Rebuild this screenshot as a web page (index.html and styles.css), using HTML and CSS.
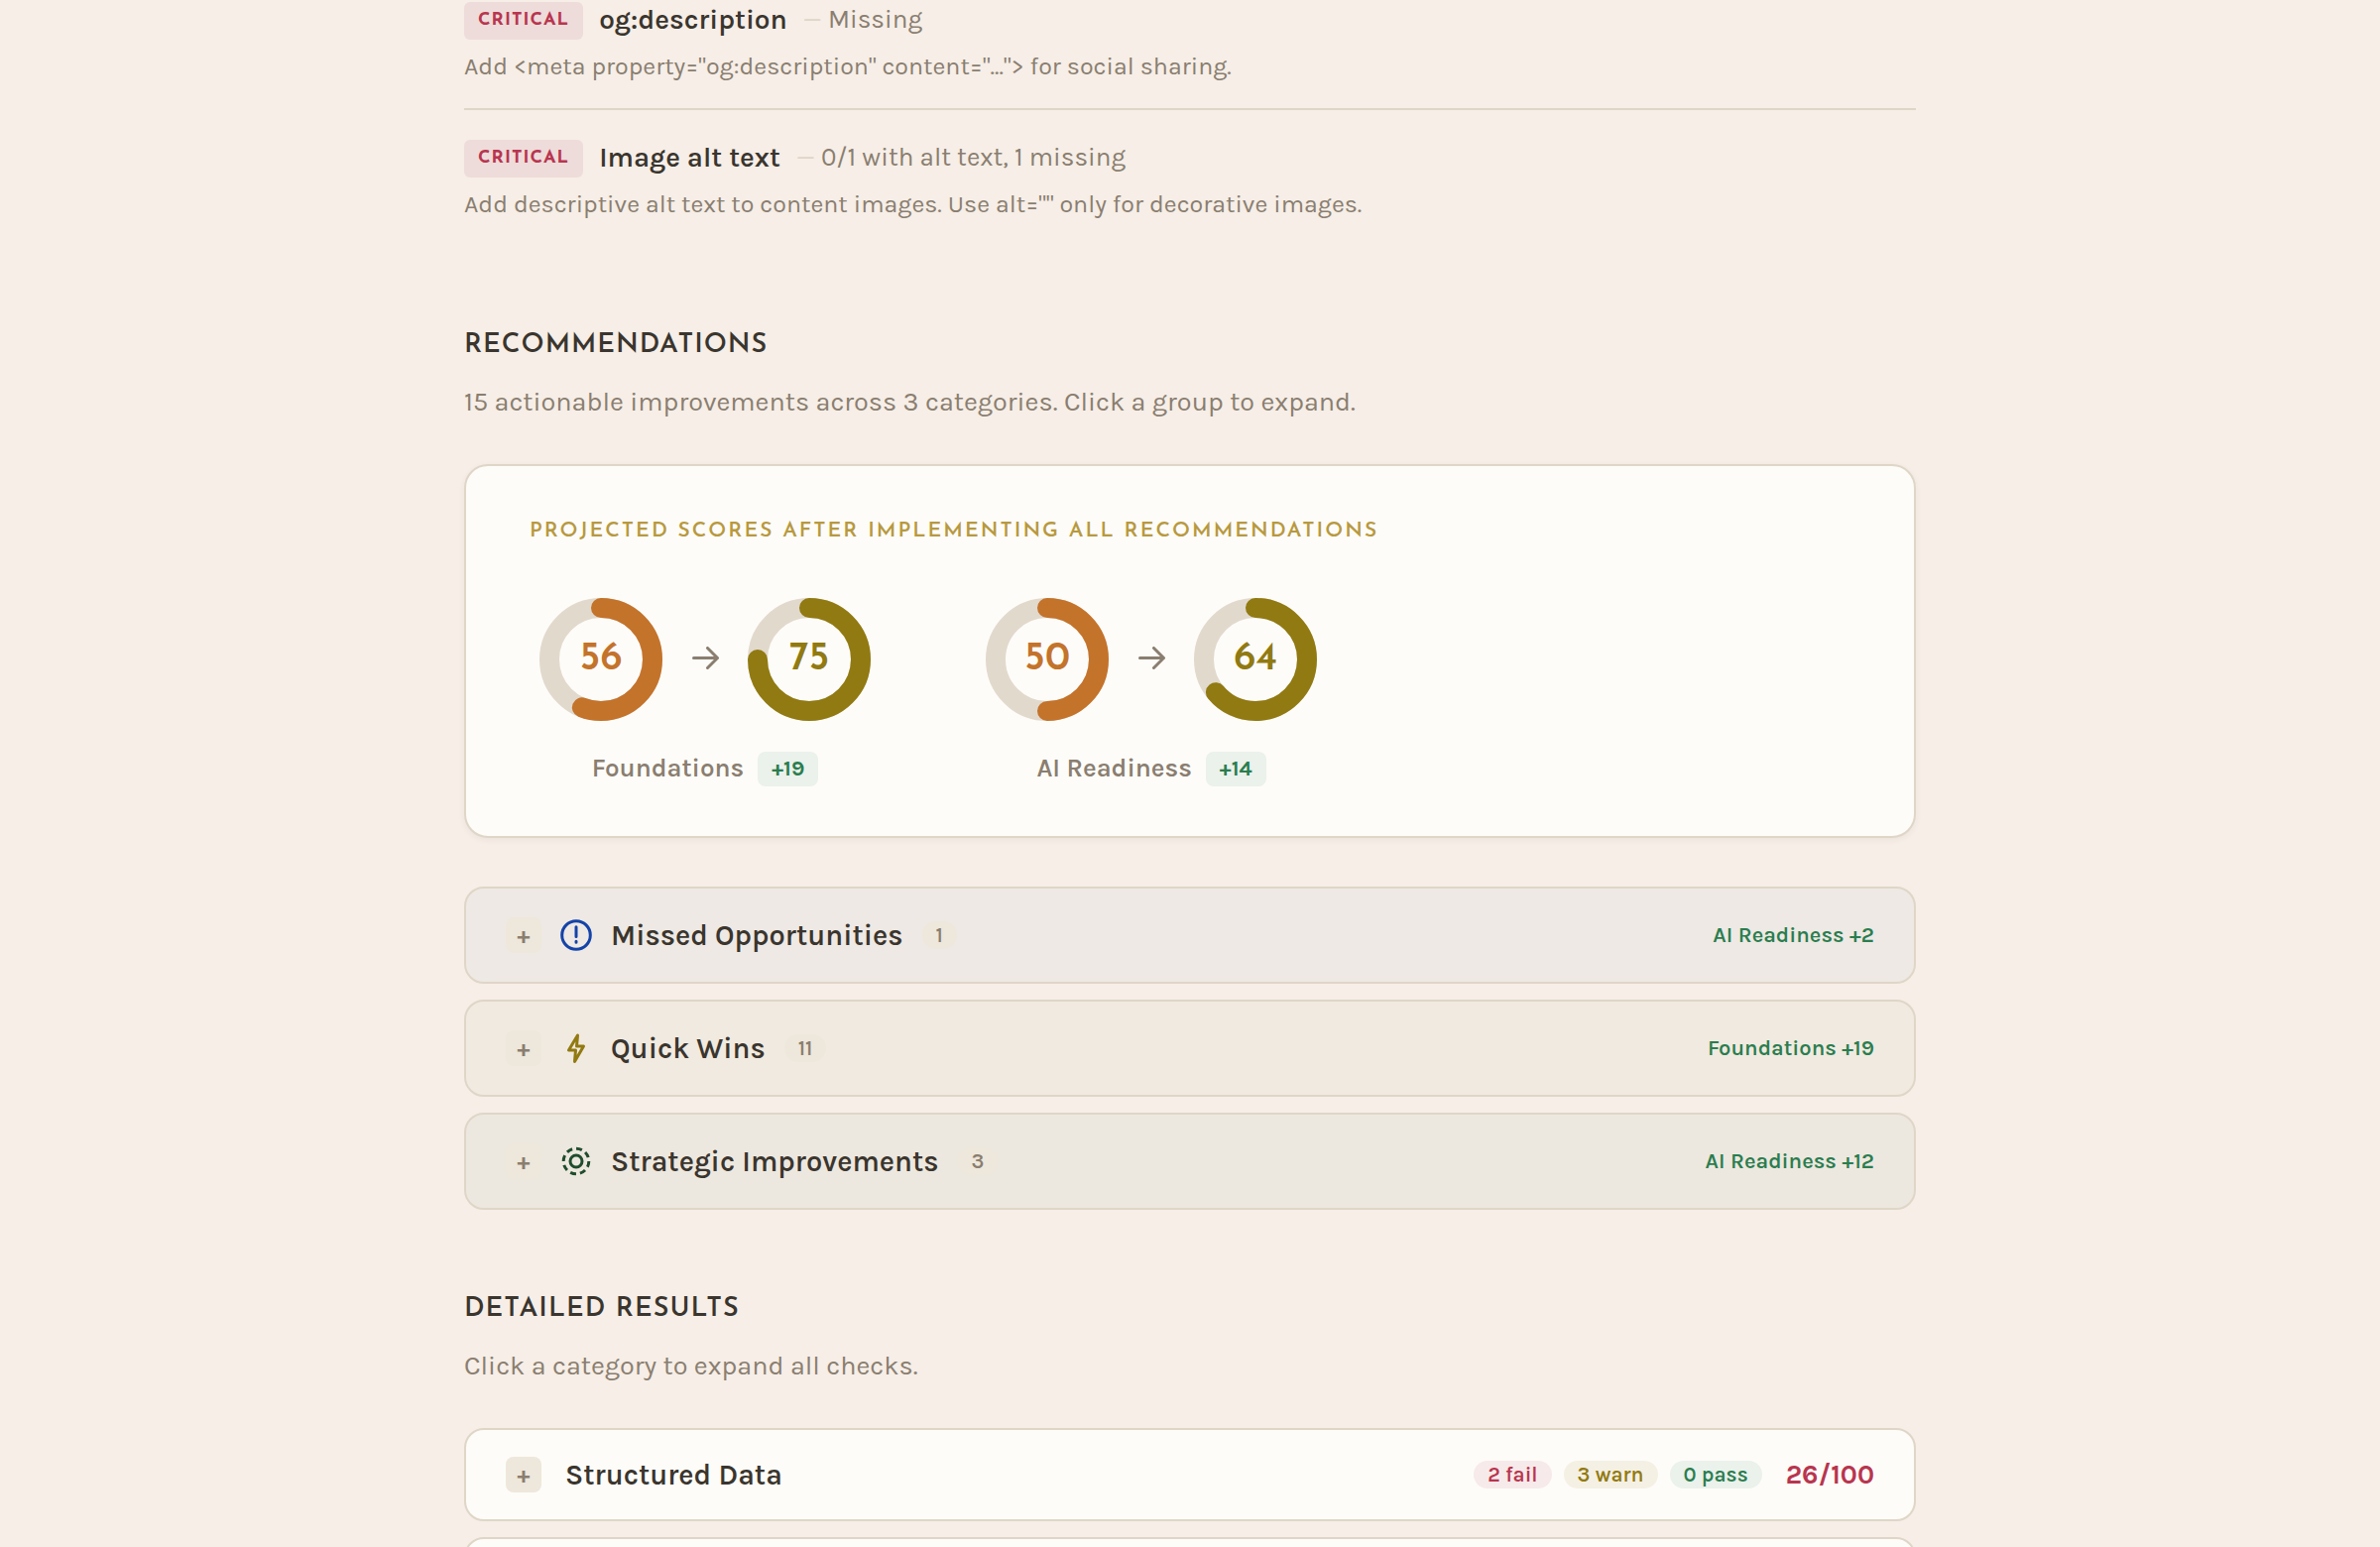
FILE: index.html
```html
<!DOCTYPE html>
<html lang="en">
<head>
    <meta charset="UTF-8">
    <meta name="viewport" content="width=device-width, initial-scale=1.0">
    <title>Site Audit Report</title>
    <link rel="stylesheet" href="styles.css">
</head>
<body>

    <main class="report">

        <!-- Critical issues -->
        <ul class="issues">
            <li class="issue">
                <div class="issue-head">
                    <span class="severity">Critical</span>
                    <strong class="issue-name">og:description</strong>
                    <span class="issue-detail"><span class="dash">—</span> Missing</span>
                </div>
                <p class="issue-fix">Add &lt;meta property="og:description" content="..."&gt; for social sharing.</p>
            </li>
            <li class="issue">
                <div class="issue-head">
                    <span class="severity">Critical</span>
                    <strong class="issue-name">Image alt text</strong>
                    <span class="issue-detail"><span class="dash">—</span> 0/1 with alt text, 1 missing</span>
                </div>
                <p class="issue-fix">Add descriptive alt text to content images. Use alt="" only for decorative images.</p>
            </li>
        </ul>

        <!-- Recommendations -->
        <section class="section">
            <h2>Recommendations</h2>
            <p class="lead">15 actionable improvements across 3 categories. Click a group to expand.</p>

            <div class="projection">
                <h3>Projected scores after implementing all recommendations</h3>
                <div class="scores">
                    <div class="score">
                        <div class="score-rings">
                            <svg class="ring ring-fair" viewBox="0 0 144 144">
                                <circle class="track" cx="72" cy="72" r="52"/>
                                <circle class="value" cx="72" cy="72" r="52" pathLength="100" stroke-dasharray="56 100"/>
                                <text x="72" y="82">56</text>
                            </svg>
                            <svg class="arrow" viewBox="0 0 30 26"><path d="M3.5 11.5h24M17.5 1.5l10 10-10 10"/></svg>
                            <svg class="ring ring-good" viewBox="0 0 144 144">
                                <circle class="track" cx="72" cy="72" r="52"/>
                                <circle class="value" cx="72" cy="72" r="52" pathLength="100" stroke-dasharray="75 100"/>
                                <text x="72" y="82">75</text>
                            </svg>
                        </div>
                        <div class="score-label">Foundations <span class="delta">+19</span></div>
                    </div>
                    <div class="score">
                        <div class="score-rings">
                            <svg class="ring ring-fair" viewBox="0 0 144 144">
                                <circle class="track" cx="72" cy="72" r="52"/>
                                <circle class="value" cx="72" cy="72" r="52" pathLength="100" stroke-dasharray="50 100"/>
                                <text x="72" y="82">50</text>
                            </svg>
                            <svg class="arrow" viewBox="0 0 30 26"><path d="M3.5 11.5h24M17.5 1.5l10 10-10 10"/></svg>
                            <svg class="ring ring-good" viewBox="0 0 144 144">
                                <circle class="track" cx="72" cy="72" r="52"/>
                                <circle class="value" cx="72" cy="72" r="52" pathLength="100" stroke-dasharray="64 100"/>
                                <text x="72" y="82">64</text>
                            </svg>
                        </div>
                        <div class="score-label">AI Readiness <span class="delta">+14</span></div>
                    </div>
                </div>
            </div>

            <div class="groups">
                <button type="button" class="group missed">
                    <span class="toggle">+</span>
                    <svg class="icon" viewBox="0 0 36 36">
                        <circle cx="18" cy="18" r="14.3"/>
                        <path d="M18 9.8v9.6M18 24.2v1"/>
                    </svg>
                    <span class="group-name">Missed Opportunities</span>
                    <span class="count">1</span>
                    <span class="gain">AI Readiness +2</span>
                </button>
                <button type="button" class="group quick">
                    <span class="toggle">+</span>
                    <svg class="icon" viewBox="0 0 36 36">
                        <path d="M19.5 5L10.5 20H17.5L16.5 31.5L25.5 16H18.5z"/>
                    </svg>
                    <span class="group-name">Quick Wins</span>
                    <span class="count">11</span>
                    <span class="gain">Foundations +19</span>
                </button>
                <button type="button" class="group strategic">
                    <span class="toggle">+</span>
                    <svg class="icon" viewBox="0 0 36 36">
                        <circle cx="18" cy="18" r="6"/>
                        <circle class="dashed" cx="18" cy="18" r="12.8"/>
                    </svg>
                    <span class="group-name">Strategic Improvements</span>
                    <span class="count">3</span>
                    <span class="gain">AI Readiness +12</span>
                </button>
            </div>
        </section>

        <!-- Detailed results -->
        <section class="section">
            <h2>Detailed results</h2>
            <p class="lead">Click a category to expand all checks.</p>

            <div class="groups">
                <button type="button" class="group category">
                    <span class="toggle">+</span>
                    <span class="group-name">Structured Data</span>
                    <span class="tallies">
                        <span class="tally fail">2 fail</span>
                        <span class="tally warn">3 warn</span>
                        <span class="tally pass">0 pass</span>
                    </span>
                    <span class="total">26/100</span>
                </button>
                <button type="button" class="group category" aria-label="Next category"></button>
            </div>
        </section>

    </main>

</body>
</html>
```
FILE: styles.css
```css
* {
    box-sizing: border-box;
}

body {
    margin: 0;
    background-color: #f6eee7;
    color: #3a352e;
    font-family: Karla, Inter, sans-serif;
    font-size: 26px;
    line-height: 40px;
    height: 100vh;
    overflow: hidden;
}

.report {
    max-width: 1560px;
    margin: 0 auto;
    padding: 0 48px;
}

h2, h3, p, ul {
    margin: 0;
}

/* Issues */
.issues {
    padding: 0;
    list-style: none;
}

.issue {
    padding: 28px 0 22px;
}

.issue:first-child {
    padding-top: 0;
    border-bottom: 2px solid #dfd6c7;
}

.issue-head {
    display: flex;
    align-items: flex-end;
    gap: 16px;
}

.severity {
    padding: 0 14px;
    border-radius: 6px;
    background-color: #eedcda;
    color: #b8354f;
    font-family: "Josefin Sans", Lato, sans-serif;
    font-size: 18px;
    font-weight: 700;
    line-height: 38px;
    letter-spacing: 1px;
    text-transform: uppercase;
}

.issue-name {
    font-size: 28px;
    font-weight: 600;
}

.issue-detail {
    color: #8a7e70;
    font-size: 26px;
}

.issue-fix {
    margin-top: 7px;
    color: #8a7e70;
    font-size: 25px;
}

.dash {
    color: #dfd6c7;
}

/* Sections */
.section {
    padding-top: 81px;
}

h2 {
    font-family: "Josefin Sans", Lato, sans-serif;
    font-size: 27px;
    font-weight: 600;
    letter-spacing: 1px;
    text-transform: uppercase;
}

.lead {
    margin: 16px 0 43px;
    color: #8a7e70;
    font-size: 27px;
}

/* Projected scores */
.projection {
    padding: 46px 64px 48px;
    border: 2px solid #dfd6c7;
    border-radius: 24px;
    background-color: #fdfcf8;
    box-shadow: 0 2px 6px rgba(58, 53, 46, 0.06);
}

h3 {
    color: #b8993f;
    font-family: "Josefin Sans", Lato, sans-serif;
    font-size: 21px;
    font-weight: 600;
    letter-spacing: 2px;
    text-transform: uppercase;
}

.scores {
    display: flex;
    gap: 96px;
    margin-top: 37px;
}

.score-rings {
    display: flex;
    align-items: center;
    gap: 18px;
}

.ring {
    width: 144px;
    height: 144px;
}

.ring circle {
    fill: none;
    stroke-width: 20px;
}

.ring .track {
    stroke: #e2d9cd;
}

.ring .value {
    stroke: currentColor;
    stroke-linecap: round;
    transform: rotate(-90deg);
    transform-origin: center;
}

.ring text {
    fill: currentColor;
    font-family: "Josefin Sans", Lato, sans-serif;
    font-size: 40px;
    font-weight: 600;
    text-anchor: middle;
}

.ring-fair {
    color: #c4732b;
}

.ring-good {
    color: #917a11;
}

.arrow {
    width: 30px;
    height: 26px;
    fill: none;
    stroke: #8a7e70;
    stroke-width: 3px;
    stroke-linecap: round;
    stroke-linejoin: round;
}

.score-label {
    display: flex;
    justify-content: center;
    align-items: center;
    gap: 14px;
    margin-top: 18px;
    color: #8a7e70;
    font-size: 26px;
    font-weight: 600;
}

.delta {
    padding: 0 14px;
    border-radius: 8px;
    background-color: #ebf1eb;
    color: #2a7d4f;
    font-size: 22px;
    font-weight: 700;
    line-height: 35px;
}

/* Expandable groups */
.groups {
    display: flex;
    flex-direction: column;
    gap: 16px;
}

.projection + .groups {
    margin-top: 49px;
}

.group {
    display: flex;
    align-items: center;
    width: 100%;
    min-height: 98px;
    padding: 0 40px;
    border: 2px solid #dfd6c7;
    border-radius: 20px;
    color: #3a352e;
    font-family: inherit;
    text-align: left;
    cursor: pointer;
}

.missed {
    background-color: #eee9e4;
}

.quick {
    background-color: #f1eae0;
}

.strategic {
    background-color: #ede8df;
}

.category {
    min-height: 94px;
    background-color: #fdfcf8;
}

.toggle {
    width: 36px;
    border-radius: 8px;
    background-color: #eee7db;
    color: #8a7e70;
    font-size: 24px;
    font-weight: 700;
    line-height: 36px;
    text-align: center;
}

.icon {
    width: 36px;
    height: 36px;
    margin-left: 17px;
    fill: none;
    stroke-width: 3px;
    stroke-linecap: round;
    stroke-linejoin: round;
}

.missed .icon {
    stroke: #1443a8;
}

.quick .icon {
    stroke: #917a11;
}

.strategic .icon {
    stroke: #1f4d2e;
}

.icon .dashed {
    stroke-dasharray: 6 4;
    stroke-linecap: butt;
}

.group-name {
    margin-left: 17px;
    font-size: 29px;
    font-weight: 600;
}

.category .group-name {
    margin-left: 24px;
}

.count {
    margin-left: 19px;
    padding: 0 14px;
    border-radius: 14px;
    background-color: #eee7db;
    color: #8a7e70;
    font-size: 21px;
    font-weight: 600;
    line-height: 28px;
}

.gain {
    margin-left: auto;
    color: #2a7d4f;
    font-size: 22px;
    font-weight: 600;
}

.tallies {
    display: flex;
    gap: 12px;
    margin-left: auto;
}

.tally {
    padding: 0 14px;
    border-radius: 14px;
    font-size: 21px;
    font-weight: 600;
    line-height: 28px;
}

.fail {
    background-color: #f7eaea;
    color: #b8354f;
}

.warn {
    background-color: #f5f0e4;
    color: #917a11;
}

.pass {
    background-color: #ebf1eb;
    color: #2a7d4f;
}

.total {
    margin-left: 24px;
    color: #b8354f;
    font-size: 27px;
    font-weight: 700;
}
```
